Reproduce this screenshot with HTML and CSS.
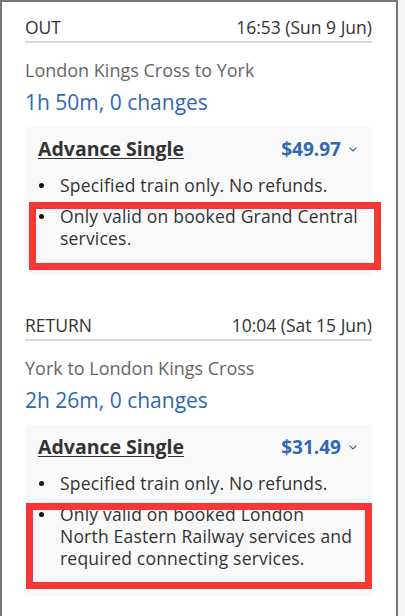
FILE: index.html
```html
<!DOCTYPE html>
<html lang="en">
<head>
<meta charset="utf-8">
<title>Journey summary</title>
<link rel="stylesheet" href="styles.css">
</head>
<body>
<div class="card">
  <section class="leg">
    <div class="leg-head"><span>OUT</span><span>16:53 (Sun 9 Jun)</span></div>
    <div class="route">London Kings Cross to York</div>
    <div class="duration">1h 50m, 0 changes</div>
    <div class="fare">
      <div class="fare-head">
        <span class="fare-name">Advance Single</span>
        <span class="price">$49.97<svg class="chev" width="8" height="5" viewBox="0 0 8 5"><path d="M0.6 0.6 L4 4 L7.4 0.6" fill="none" stroke="#2f68b3" stroke-width="1.2"/></svg></span>
      </div>
      <ul class="conditions">
        <li>Specified train only. No refunds.</li>
        <li class="flagged">Only valid on booked Grand Central services.<span class="mark mark-a"></span></li>
      </ul>
    </div>
  </section>
  <section class="leg">
    <div class="leg-head"><span>RETURN</span><span>10:04 (Sat 15 Jun)</span></div>
    <div class="route">York to London Kings Cross</div>
    <div class="duration">2h 26m, 0 changes</div>
    <div class="fare">
      <div class="fare-head">
        <span class="fare-name">Advance Single</span>
        <span class="price">$31.49<svg class="chev" width="8" height="5" viewBox="0 0 8 5"><path d="M0.6 0.6 L4 4 L7.4 0.6" fill="none" stroke="#2f68b3" stroke-width="1.2"/></svg></span>
      </div>
      <ul class="conditions">
        <li>Specified train only. No refunds.</li>
        <li class="flagged">Only valid on booked London North&nbsp;Eastern Railway services and required connecting services.<span class="mark mark-b"></span></li>
      </ul>
    </div>
  </section>
</div>
</body>
</html>
```

FILE: styles.css
```css
html, body {
  margin: 0;
  padding: 0;
}
body {
  background: #f3f3f3;
  font-family: "Open Sans", "DejaVu Sans", sans-serif;
  color: #333;
}
.card {
  box-sizing: border-box;
  width: 398px;
  min-height: 616px;
  background: #fff;
  border: 2px solid #777;
  border-bottom: none;
  padding: 13px 24px 0 23px;
}
.leg + .leg {
  margin-top: 38px;
}
.leg-head {
  display: flex;
  justify-content: space-between;
  font-size: 17.5px;
  line-height: 24px;
  color: #333;
  padding-bottom: 2px;
  border-bottom: 2px solid #dadada;
}
.route {
  margin-top: 15px;
  font-size: 18px;
  line-height: 24px;
  color: #666;
}
.duration {
  margin-top: 6px;
  font-size: 21px;
  line-height: 28px;
  color: #2f68b3;
}
.fare {
  margin-top: 11px;
  background: #f9f9f9;
  padding: 8px 12px 18px 13px;
}
.fare-head {
  display: flex;
  justify-content: space-between;
  align-items: baseline;
  padding-right: 3px;
  font-size: 19.5px;
  line-height: 27px;
  font-weight: 700;
}
.fare-name {
  color: #333;
  text-decoration: underline;
  text-underline-offset: 2px;
}
.price {
  color: #2f68b3;
  font-size: 19px;
  display: flex;
  align-items: center;
  gap: 8px;
}
.chev {
  display: block;
}
.conditions {
  list-style: none;
  margin: 12px 0 0;
  padding: 0;
}
.conditions li {
  position: relative;
  display: flex;
  font-size: 17.5px;
  line-height: 21.8px;
  letter-spacing: 0.2px;
  color: #333;
  margin-bottom: 9px;
}
.conditions li::before {
  content: "";
  flex: none;
  width: 5px;
  height: 5px;
  border-radius: 50%;
  background: #111;
  margin: 8px 16px 0 1px;
}
.conditions li:last-child {
  margin-bottom: 8px;
}
.mark {
  position: absolute;
  border: 7px solid #fa3535;
  pointer-events: none;
}
.mark-a {
  left: -9px;
  right: -21px;
  top: -4px;
  bottom: -21px;
}
.mark-b {
  left: -12px;
  right: -12px;
  top: -1px;
  bottom: -19px;
}
```
